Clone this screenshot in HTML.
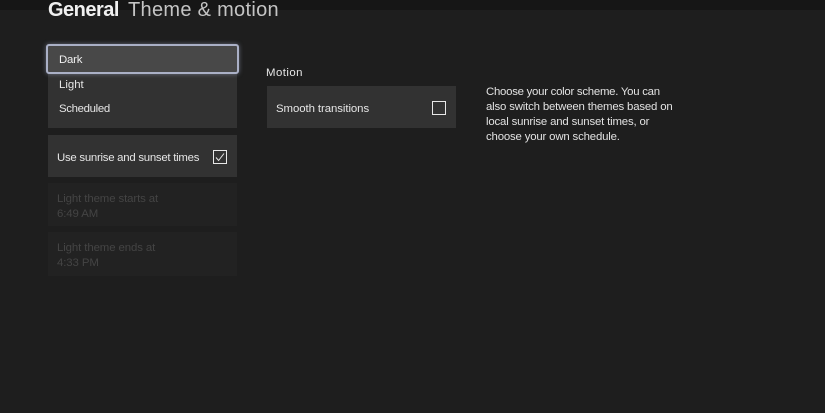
<!DOCTYPE html>
<html><head><meta charset="utf-8"><style>
*{margin:0;padding:0;box-sizing:border-box}
html,body{width:825px;height:413px;overflow:hidden;background:#1e1e1e;font-family:"Liberation Sans",sans-serif}
.a{position:absolute;white-space:nowrap}
.t{font-size:11.4px;color:#e6e6e6;line-height:14px}
.box{position:absolute;background:#323232}
.d{position:absolute;background:#222222}
.f{font-size:11.4px;color:#444444;line-height:14px;letter-spacing:-.1px}
</style></head><body>
<div class="a" style="left:0;top:0;width:825px;height:10px;background:#161616"></div>
<div class="a" style="left:48px;top:-2px;font-size:20px;font-weight:bold;color:#f0f0f0;line-height:24px;letter-spacing:-.5px">General</div>
<div class="a" style="left:128px;top:-2px;font-size:20px;color:#c4c4c4;line-height:24px;letter-spacing:.3px">Theme &amp; motion</div>

<div class="box" style="left:48px;top:46px;width:189px;height:82px"></div>
<div class="a" style="left:46px;top:44px;width:193px;height:30px;background:#484848;border:2px solid #aab0c6;border-radius:3px;box-shadow:0 0 5px rgba(170,180,210,.5)"></div>
<div class="a t" style="left:59px;top:53px;color:#f0f0f0;letter-spacing:-.2px">Dark</div>
<div class="a t" style="left:59px;top:78px">Light</div>
<div class="a t" style="left:59px;top:102px;letter-spacing:-.33px">Scheduled</div>

<div class="box" style="left:48px;top:135px;width:189px;height:42px"></div>
<div class="a t" style="left:57px;top:151px;letter-spacing:-.26px">Use sunrise and sunset times</div>
<svg class="a" style="left:213px;top:150px" width="14" height="14" viewBox="0 0 14 14"><rect x=".5" y=".5" width="13" height="13" fill="none" stroke="#e8e8e8"/><path d="M3 7.5L5.6 10.5L11 3.5" fill="none" stroke="#e8e8e8"/></svg>

<div class="d" style="left:48px;top:183px;width:189px;height:43px"></div>
<div class="a f" style="left:57px;top:192px">Light theme starts at</div>
<div class="a f" style="left:57px;top:207px">6:49 AM</div>
<div class="d" style="left:48px;top:232px;width:189px;height:44px"></div>
<div class="a f" style="left:57px;top:241px">Light theme ends at</div>
<div class="a f" style="left:57px;top:256px">4:33 PM</div>

<div class="a t" style="left:266px;top:66px;letter-spacing:.45px">Motion</div>
<div class="box" style="left:267px;top:86px;width:189px;height:42px"></div>
<div class="a t" style="left:276px;top:102px;letter-spacing:-.07px">Smooth transitions</div>
<svg class="a" style="left:432px;top:101px" width="14" height="14" viewBox="0 0 14 14"><rect x=".5" y=".5" width="13" height="13" fill="none" stroke="#e8e8e8"/></svg>

<div class="a t" style="left:486px;top:85px;color:#e2e2e2;letter-spacing:-.26px">Choose your color scheme. You can</div>
<div class="a t" style="left:486px;top:100px;color:#e2e2e2;letter-spacing:-.17px">also switch between themes based on</div>
<div class="a t" style="left:486px;top:115px;color:#e2e2e2;letter-spacing:-.17px">local sunrise and sunset times, or</div>
<div class="a t" style="left:486px;top:130px;color:#e2e2e2;letter-spacing:-.17px">choose your own schedule.</div>
</body></html>
